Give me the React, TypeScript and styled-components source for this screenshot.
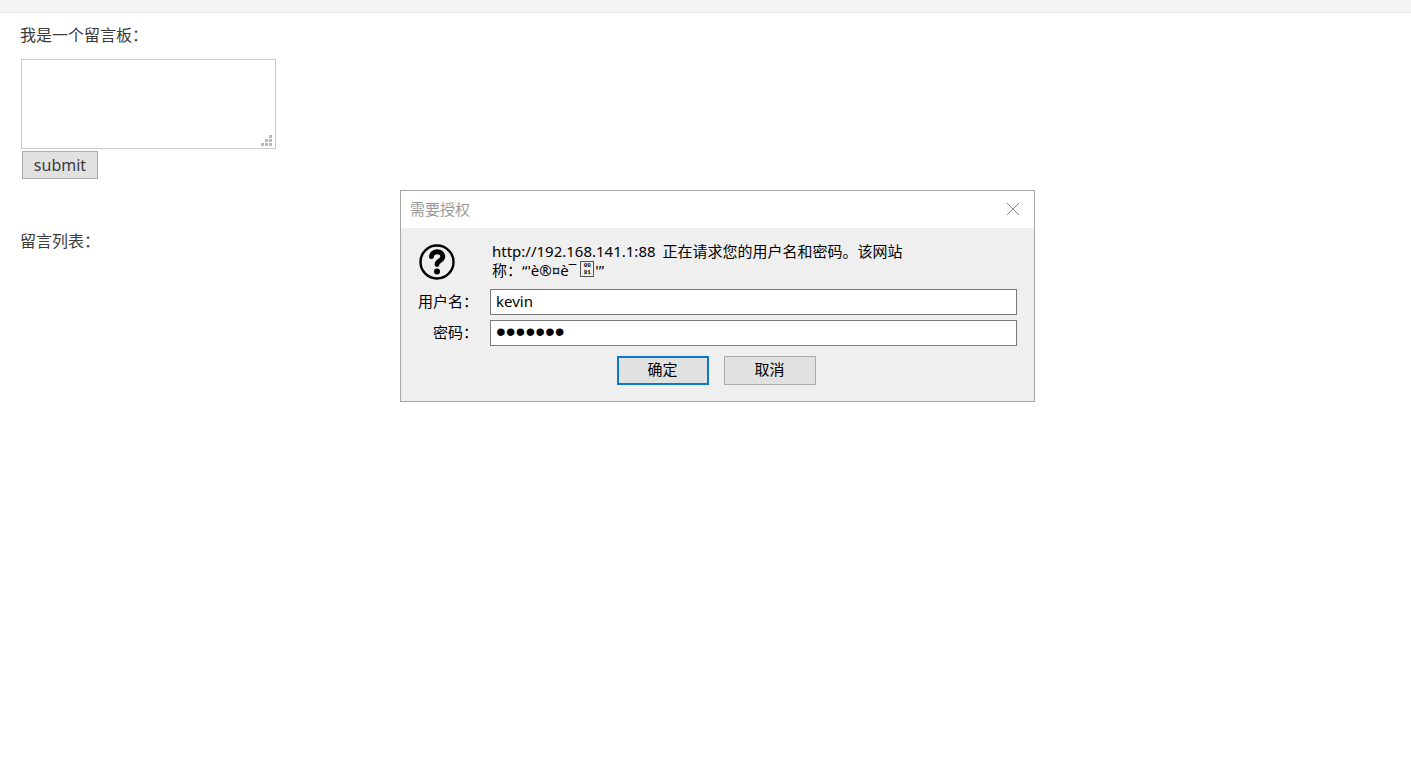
import React from 'react';
import styled, { createGlobalStyle } from 'styled-components';

const GlobalStyle = createGlobalStyle`
  * { box-sizing: border-box; }
  body {
    margin: 0;
    background: #fff;
    color: #3c3c3c;
    font: 16px/24px "Open Sans", "Noto Sans CJK SC", sans-serif;
  }
`;

const TopBar = styled.header`
  height: 13px;
  background: #f4f4f4;
  border-bottom: 1px solid #e6e6e6;
`;

const Board = styled.main`
  padding: 10px 20px;
`;

const BoardForm = styled.form`
  display: flex;
  flex-direction: column;
  align-items: flex-start;
`;

const BoardLabel = styled.label`
  display: block;
`;

const MessageBox = styled.div`
  position: relative;
  width: 255px;
  height: 90px;
  margin: 12px 0 2px 1px;
`;

const MessageInput = styled.textarea`
  display: block;
  width: 100%;
  height: 100%;
  padding: 4px;
  border: 1px solid #ccc;
  border-radius: 0;
  background: #fff;
  font: inherit;
  resize: none;
`;

const Grip = styled.svg`
  position: absolute;
  right: 3px;
  bottom: 3px;
  pointer-events: none;
`;

const SubmitButton = styled.button`
  width: 76px;
  height: 28px;
  margin-left: 2px;
  padding: 0;
  border: 1px solid #adadad;
  background: #e1e1e1;
  color: #3c3c3c;
  font: 16px/24px "Noto Sans", sans-serif;
`;

const ListTitle = styled.h2`
  margin: 50px 0 0;
  font-size: 16px;
  font-weight: 400;
`;

const Dialog = styled.section`
  position: absolute;
  top: 190px;
  left: 400px;
  width: 45%;
  min-width: 520px;
  border: 1px solid #a6a6a6;
  background: #efefef;
  color: #000;
  font: 15px/18px "Noto Sans", "Noto Sans CJK SC", sans-serif;
`;

const TitleBar = styled.div`
  display: flex;
  align-items: center;
  justify-content: space-between;
  height: 37px;
  padding: 0 14px 2px 9px;
  background: #fff;
`;

const DialogTitle = styled.h1`
  margin: 0;
  color: #999;
  font-size: 15px;
  font-weight: 400;
`;

const CloseButton = styled.button`
  display: flex;
  padding: 0;
  border: 0;
  background: none;
`;

const DialogForm = styled.form`
  padding: 14px 17px 16px;
`;

const Notice = styled.div`
  display: grid;
  grid-template-columns: 72px 1fr;
  align-items: start;
  margin-bottom: 8px;
`;

const QuestionIcon = styled.svg`
  margin-top: 1px;
`;

const NoticeText = styled.p`
  max-width: 430px;
  margin: 0;
  padding-left: 2px;
  line-height: 19px;
`;

const Address = styled.span`
  margin-right: 3px;
`;

const CodeBox = styled.span`
  display: inline-flex;
  flex-direction: column;
  align-items: center;
  justify-content: center;
  width: 14px;
  height: 16px;
  margin: 0 1px 0 4px;
  border: 1px solid #555;
  font: 700 6px/7px "Liberation Mono", monospace;
  vertical-align: top;
`;

const Field = styled.div`
  display: grid;
  grid-template-columns: 60px 1fr;
  column-gap: 12px;
  align-items: center;
  margin-bottom: 5px;
`;

const FieldLabel = styled.label`
  padding-bottom: 2px;
  text-align: right;
  white-space: nowrap;
`;

const FieldInput = styled.input`
  width: 100%;
  height: 26px;
  padding: 0 5px 2px;
  border: 1px solid #7a7a7a;
  border-radius: 0;
  background: #fff;
  color: #000;
  font: 15px/18px "Noto Sans", sans-serif;
  outline: none;

  &[type='password'] {
    font-family: "Liberation Sans", sans-serif;
    font-size: 28px;
  }
`;

const Actions = styled.div`
  display: flex;
  justify-content: center;
  gap: 15px;
  margin-top: 10px;
  padding-right: 2px;
`;

const ActionButton = styled.button<{ $primary?: boolean }>`
  width: 92px;
  height: 29px;
  padding: 0 1px 4px 0;
  border: ${({ $primary }) => ($primary ? '2px solid #0c78cc' : '1px solid #adadad')};
  background: #e1e1e1;
  color: #000;
  font: inherit;
`;

const gripDots = [[8, 0], [4, 4], [8, 4], [0, 8], [4, 8], [8, 8]];

export default function App() {
  return (
    <>
      <GlobalStyle />
      <TopBar />
      <Board>
        <BoardForm onSubmit={(e) => e.preventDefault()}>
          <BoardLabel htmlFor="message">我是一个留言板：</BoardLabel>
          <MessageBox>
            <MessageInput id="message" />
            <Grip width="12" height="11" viewBox="0 0 12 11" aria-hidden="true">
              {gripDots.map(([x, y]) => (
                <rect key={`${x}-${y}`} x={x} y={y} width="3" height="3" fill="#b9b9b9" />
              ))}
            </Grip>
          </MessageBox>
          <SubmitButton type="submit">submit</SubmitButton>
        </BoardForm>
        <ListTitle>留言列表：</ListTitle>
      </Board>

      <Dialog role="dialog" aria-labelledby="dialog-title">
        <TitleBar>
          <DialogTitle id="dialog-title">需要授权</DialogTitle>
          <CloseButton type="button" aria-label="关闭">
            <svg width="14" height="14" viewBox="0 0 14 14" stroke="#888" fill="none">
              <path d="M1 1l12 12M13 1L1 13" />
            </svg>
          </CloseButton>
        </TitleBar>
        <DialogForm onSubmit={(e) => e.preventDefault()}>
          <Notice>
            <QuestionIcon width="38" height="38" viewBox="0 0 38 38" fill="none" stroke="#000" aria-hidden="true">
              <circle cx="19" cy="19" r="16.5" strokeWidth="2.4" />
              <path d="M13.4 13.6C13.8 7.200 24.8 7.200 24.8 13.6c0 4.200-5.800 4.200-5.800 8" strokeWidth="4.9" strokeLinecap="round" />
              <circle cx="19" cy="28.500" r="3" fill="#000" stroke="none" />
            </QuestionIcon>
            <NoticeText>
              <Address>http://192.168.141.1:88</Address> 正在请求您的用户名和密码。该网站称：“'è®¤è¯
              <CodeBox><span>00</span><span>81</span></CodeBox>'”
            </NoticeText>
          </Notice>
          <Field>
            <FieldLabel htmlFor="username">用户名：</FieldLabel>
            <FieldInput id="username" type="text" defaultValue="kevin" />
          </Field>
          <Field>
            <FieldLabel htmlFor="password">密码：</FieldLabel>
            <FieldInput id="password" type="password" defaultValue="1234567" />
          </Field>
          <Actions>
            <ActionButton type="submit" $primary>确定</ActionButton>
            <ActionButton type="button">取消</ActionButton>
          </Actions>
        </DialogForm>
      </Dialog>
    </>
  );
}
